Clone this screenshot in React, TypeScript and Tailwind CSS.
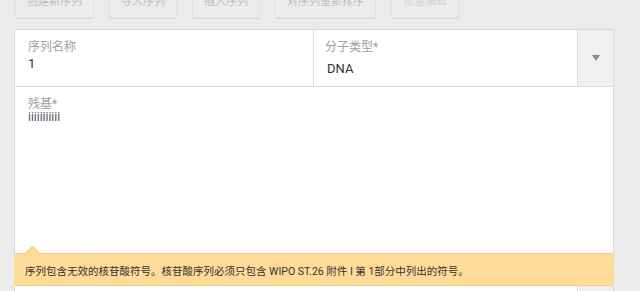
import React from 'react';

const font = "font-['Roboto','Noto_Sans_CJK_SC',sans-serif]";

const toolbar = [
	{ label: '创建新序列', disabled: false },
	{ label: '导入序列', disabled: false },
	{ label: '插入序列', disabled: false },
	{ label: '对序列重新排序', disabled: false },
	{ label: '批量编辑', disabled: true },
];

const App = () => {
	return (
		<div className={`${font} h-[291px] w-[640px] overflow-hidden bg-[#ebebeb] pl-[14px]`}>
			{/* toolbar, scrolled partly out of view */}
			<div className="-mt-[14px] flex gap-[15px] pl-px">
				{toolbar.map((b) => (
					<div
						key={b.label}
						className={`flex h-[32px] items-center rounded-[2px] border border-[#e3e3e3] bg-[#ececec] px-[11px] text-[11px] shadow-[0_1px_1px_rgba(0,0,0,0.08)] ${
							b.disabled ? 'text-[#d6d6d6]' : 'text-[#bdbdbd]'
						}`}
					>
						{b.label}
					</div>
				))}
			</div>

			<div className="mt-[11px] w-[600px] border border-[#d8d8d8] bg-white">
				<div className="flex h-[57px] border-b border-[#dcdcdc]">
					<div className="w-[299px] border-r border-[#dcdcdc] pl-[13px] pt-[9px]">
						<div className="text-[12px] leading-[16px] text-[#a0a0a0]">序列名称</div>
						<div className="mt-[1px] text-[13px] leading-[16px] text-[#333]">1</div>
					</div>
					<div className="flex-1 pl-[11px] pt-[9px]">
						<div className="text-[12px] leading-[16px] text-[#a0a0a0]">分子类型*</div>
						<div className="mt-[6px] pl-[2px] text-[13px] leading-[16px] text-[#333]">DNA</div>
					</div>
					<div className="flex w-[36px] items-center justify-center border-l border-[#dcdcdc] bg-[#f0f0f0]">
						<svg width="8" height="6" viewBox="0 0 8 6">
							<path d="M0 0 L8 0 L4 6 Z" fill="#8a8a8a" />
						</svg>
					</div>
				</div>

				<div className="h-[166px] pl-[13px] pt-[9px]">
					<div className="text-[12px] leading-[16px] text-[#a0a0a0]">残基*</div>
					<div className="-mt-[2px] text-[12px] leading-[14px] text-[#555]">iiiiiiiiiii</div>
				</div>

				<div className="relative -mx-px border-y border-[#f2cf86] bg-[#fedb97] pl-[11px]">
					<span className="absolute -top-[6px] left-[13px] h-[11px] w-[11px] rotate-45 border-l border-t border-[#f2cf86] bg-[#fedb97]" />
					<div className="relative flex h-[31px] items-center pt-[5px] text-[10.5px] text-[#333]">
						序列包含无效的核苷酸符号。核苷酸序列必须只包含 WIPO ST.26 附件 I 第 1部分中列出的符号。
					</div>
				</div>

				<div className="flex h-[20px]">
					<div className="w-[562px] bg-white" />
					<div className="flex-1 border-l border-[#dcdcdc] bg-[#f0f0f0]" />
				</div>
			</div>
		</div>
	);
};

export default App;
